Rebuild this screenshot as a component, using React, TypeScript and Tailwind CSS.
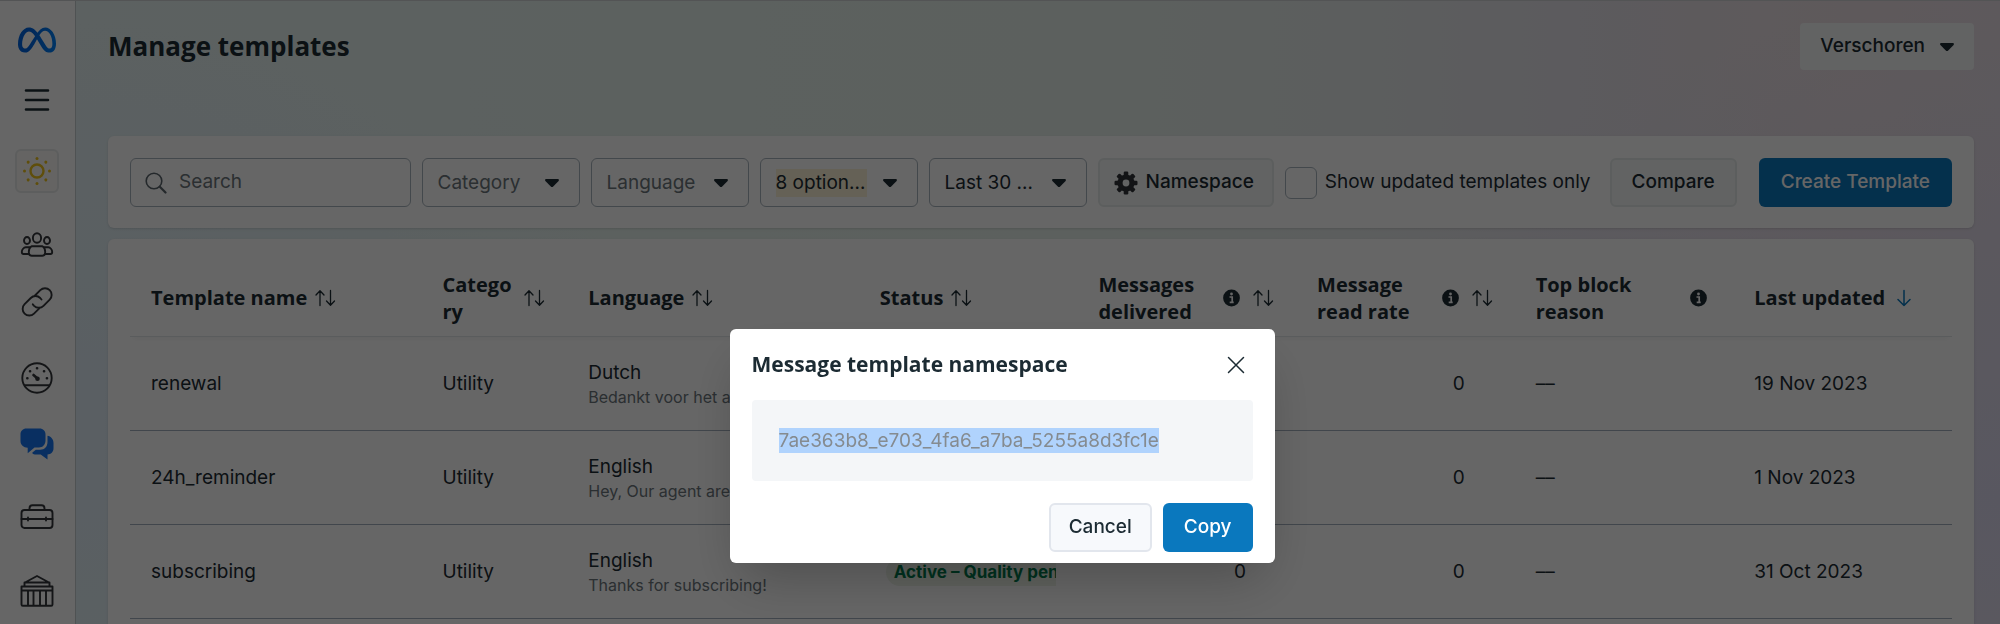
import type { ReactNode } from 'react';
import { SiMeta } from 'react-icons/si';

type Column = { title: string; width: string; info?: boolean; sort?: 'both' | 'down' };

const columns: Column[] = [
  { title: 'Template name', width: 'w-[16%]', sort: 'both' },
  { title: 'Category', width: 'w-[8%]', sort: 'both' },
  { title: 'Language', width: 'w-[16%]', sort: 'both' },
  { title: 'Status', width: 'w-[12%]', sort: 'both' },
  { title: 'Messages delivered', width: 'w-[12%]', info: true, sort: 'both' },
  { title: 'Message read rate', width: 'w-[12%]', info: true, sort: 'both' },
  { title: 'Top block reason', width: 'w-[12%]', info: true },
  { title: 'Last updated', width: 'w-[12%]', sort: 'down' }
];

type Template = { name: string; language: string; preview: string; status?: string; updated: string };

const templates: Template[] = [
  { name: 'renewal', language: 'Dutch', preview: 'Bedankt voor het a...', updated: '19 Nov 2023' },
  { name: '24h_reminder', language: 'English', preview: 'Hey, Our agent are...', updated: '1 Nov 2023' },
  { name: 'subscribing', language: 'English', preview: 'Thanks for subscribing!', status: 'Active – Quality pending', updated: '31 Oct 2023' }
];

const Caret = () => (
  <svg className="pointer-events-none h-2 w-3.5 shrink-0" viewBox="0 0 14 8" fill="#1c2b33" aria-hidden="true">
    <path d="M1.3 0h11.4c1.1 0 1.6 1.1.9 1.9L8.2 7.4c-.7.7-1.7.7-2.4 0L.4 1.9C-.3 1.1.2 0 1.3 0z" />
  </svg>
);

const SortArrows = () => (
  <svg className="h-[18px] w-[22px] shrink-0" viewBox="0 0 22 18" fill="none" stroke="#1c2b33" strokeWidth="1.3" strokeLinecap="round" strokeLinejoin="round" aria-hidden="true">
    <path d="M5 16.500V2M1 6l4-4.300L9 6M15.500 1.500V16M11.500 12l4 4.300L19.500 12" />
  </svg>
);

const ArrowDown = () => (
  <svg className="ml-1 h-[18px] w-4 shrink-0" viewBox="0 0 16 18" fill="none" stroke="#0a78be" strokeWidth="1.5" strokeLinecap="round" strokeLinejoin="round" aria-hidden="true">
    <path d="M7 1.500V16.500M1 10.500l6 6 6-6" />
  </svg>
);

const InfoIcon = () => (
  <svg className="h-[18px] w-[22px] shrink-0" viewBox="0 0 22 18" aria-hidden="true">
    <circle cx="8.500" cy="9" r="8.400" fill="#1c2b33" />
    <circle cx="8.500" cy="5" r="1.400" fill="#fff" />
    <path d="M6.500 8h2.700v5M6.700 13.300h4" fill="none" stroke="#fff" strokeWidth="1.700" />
  </svg>
);

const Gear = () => (
  <svg className="size-6 shrink-0" viewBox="-12 -12 24 24" fill="#303338" aria-hidden="true">
    <mask id="gear-hole">
      <rect x="-12" y="-12" width="24" height="24" fill="#fff" />
      <circle r="3.400" fill="#000" />
    </mask>
    <g mask="url(#gear-hole)">
      <circle r="8.600" />
      {[0, 45, 90, 135].map((angle) => (
        <rect key={angle} x="-2.300" y="-11.500" width="4.600" height="23" rx="1.200" transform={`rotate(${angle})`} />
      ))}
    </g>
  </svg>
);

const LineIcon = ({ children }: { children: ReactNode }) => (
  <svg className="size-9" viewBox="0 0 36 36" fill="none" stroke="#33363a" strokeWidth="1.900" strokeLinecap="round" strokeLinejoin="round" aria-hidden="true">
    {children}
  </svg>
);

const NavLink = ({ label, className, children }: { label: string; className: string; children: ReactNode }) => (
  <a href="#" aria-label={label} className={`flex h-8 items-center justify-center ${className}`}>
    {children}
  </a>
);

const Sidebar = () => (
  <nav aria-label="Main" className="flex w-[76px] shrink-0 flex-col items-center border-r border-[#c5ccd0] bg-white pt-[23px] pr-px">
    <a href="#" aria-label="Meta" className="flex h-8 items-center">
      <svg className="absolute size-0" aria-hidden="true">
        <defs>
          <linearGradient id="meta-blue" x1="0" y1="0" x2="1" y2="0">
            <stop offset="0.300" stopColor="#0064e0" />
            <stop offset="1" stopColor="#0082fb" />
          </linearGradient>
        </defs>
      </svg>
      <SiMeta size={38} fill="url(#meta-blue)" />
    </a>
    <button type="button" aria-label="Menu" className="mt-7 flex h-8 items-center">
      <svg className="h-6 w-[26px]" viewBox="0 0 26 24" stroke="#1c2b33" strokeWidth="2.600" strokeLinecap="round" aria-hidden="true">
        <path d="M2 2.500h22M2 12h22M2 21.500h22" />
      </svg>
    </button>
    <a href="#" aria-label="Account" className="mt-[33px] flex size-11 items-center justify-center rounded-md border-2 border-[#e9eaea] bg-[#fcfbf8]">
      <svg className="size-8" viewBox="-16 -16 32 32" aria-hidden="true">
        <circle r="6.500" fill="none" stroke="#eec21c" strokeWidth="2.400" />
        {[0, 45, 90, 135, 180, 225, 270, 315].map((angle) => (
          <circle key={angle} cy="-12.500" r="1.500" fill="#eec21c" transform={`rotate(${angle})`} />
        ))}
      </svg>
    </a>
    <NavLink label="Audiences" className="mt-9">
      <LineIcon>
        <ellipse cx="18" cy="11" rx="4.100" ry="4.800" />
        <ellipse cx="8" cy="13.500" rx="3" ry="3.500" />
        <ellipse cx="28" cy="13.500" rx="3" ry="3.500" />
        <path d="M12.500 19.300h11c1.700 1 2.700 3.200 2.700 5.800 0 2.500-1 3.700-3 3.700H12.800c-2 0-3-1.200-3-3.700 0-2.600 1-4.800 2.700-5.800z" />
        <path d="M10.500 20.300H6.800c-2 0-4 2.300-4 4.700 0 1.400.7 2 1.800 2H10M25.500 20.300h3.700c2 0 4 2.300 4 4.700 0 1.400-.7 2-1.800 2H26" />
      </LineIcon>
    </NavLink>
    <NavLink label="Links" className="mt-[25px]">
      <LineIcon>
        <path d="M16 11.500l5.300-5.300a6.600 6.600 0 0 1 9.400 9.400l-6.200 6.200a6.600 6.600 0 0 1-9.400 0l-1.300-1.500" />
        <path d="M20.300 24.300l-5.300 5.300a6.600 6.600 0 0 1-9.400-9.400l6.200-6.200a6.600 6.600 0 0 1 9.400 0l1.300 1.500" />
      </LineIcon>
    </NavLink>
    <NavLink label="Dashboard" className="mt-11">
      <LineIcon>
        <circle cx="18" cy="18" r="14.700" />
        <path d="M6 25.300h24" />
        <path d="M14.500 15l4 3.500" strokeWidth="2.600" />
        <circle cx="18.500" cy="18.800" r="1.200" strokeWidth="2.200" />
        <path d="M8.300 18.200h.1M11 11.200h.1M18 8.300h.1M25 11.200h.1M27.900 18.200h.1" strokeWidth="2.600" />
      </LineIcon>
    </NavLink>
    <NavLink label="WhatsApp messages" className="mt-[34px]">
      <svg className="size-9" viewBox="0 0 36 36" fill="#1877f2" aria-hidden="true">
        <path d="M7.300 2.500h13.400c3.300 0 5.800 2.500 5.800 5.800v6.200c0 4.200-2.800 7-6.500 7h-4.500L8.700 27.300v-5.600C4.500 21.500 1.500 19 1.500 15V8.300c0-3.300 2.500-5.800 5.800-5.800z" />
        <path d="M28.500 9.800c3.500.6 6 3.500 6 7.200v5.500c0 3.400-2.500 5.800-6 6v5l-6.800-5h-5.900c-1.300 0-2.200-.8-2.600-1.700l3.600-3h4.400c4.600 0 7.300-3.200 7.300-8z" />
      </svg>
    </NavLink>
    <NavLink label="Business tools" className="mt-[41px]">
      <LineIcon>
        <rect x="2.500" y="11" width="31" height="18" rx="3" />
        <path d="M10.500 10.500V9.500c0-2 1-3.200 3-3.200h9c2 0 3 1.200 3 3.200v1M2.500 20h31M9 18.500v3M27 18.500v3" />
      </LineIcon>
    </NavLink>
    <NavLink label="Business settings" className="mt-[42px]">
      <LineIcon>
        <path d="M6 9.500L18 3l12 6.500M5.500 9.500h25v4h-25zM2.500 13.500h31v18c0 .8-.4 1.300-1.300 1.300H3.800c-.9 0-1.300-.5-1.300-1.300zM2.500 17.500h31M9 18v14M14.500 18v14M21 18v14M27 18v14" />
      </LineIcon>
    </NavLink>
  </nav>
);

const FilterSelect = ({ label, value, className }: { label: string; value: string; className: string }) => (
  <div className="flex h-[49px] w-[158px] shrink-0 items-center gap-4 rounded-md border border-[#a9b4bd] bg-white pr-5 pl-[15px]">
    <select aria-label={label} className={`h-7 min-w-0 flex-1 appearance-none truncate text-[19px] outline-none ${className}`}>
      <option>{value}</option>
    </select>
    <Caret />
  </div>
);

const FilterBar = () => (
  <section aria-label="Filters" className="flex items-center gap-[11px] rounded-md bg-white px-[22px] pt-[22px] pb-[21px] shadow-sm">
    <label className="flex h-[49px] min-w-0 flex-1 items-center gap-3 rounded-md border border-[#a9b4bd] px-[14px]">
      <svg className="size-[22px] shrink-0" viewBox="0 0 22 22" fill="none" stroke="#5a656c" strokeLinecap="round" aria-hidden="true">
        <circle cx="9" cy="9" r="7.800" strokeWidth="1.600" />
        <path d="M14.800 14.800l5.700 5.700" strokeWidth="2.200" />
      </svg>
      <input type="search" aria-label="Search templates" placeholder="Search" className="min-w-0 flex-1 text-[19px] outline-none placeholder:text-[#6b757b]" />
    </label>
    <FilterSelect label="Category" value="Category" className="text-[#6b757b]" />
    <FilterSelect label="Language" value="Language" className="text-[#6b757b]" />
    <FilterSelect label="Status" value="8 options selected" className="bg-[#fdf3d6] text-[#1c2b33]" />
    <FilterSelect label="Date range" value="Last 30 days" className="text-[#1c2b33]" />
    <button type="button" className="flex h-[49px] shrink-0 items-center gap-2 rounded-md border-2 border-[#e6ebea] bg-[#f5f8f7] pr-[18px] pl-[14px] font-medium">
      <Gear />
      Namespace
    </button>
    <label className="flex shrink-0 items-center gap-2">
      <input type="checkbox" className="size-8 appearance-none rounded-md border border-[#a9b4bd]" />
      Show updated templates only
    </label>
    <button type="button" className="ml-2 h-[49px] shrink-0 rounded-md border-2 border-[#e6ebea] bg-[#f5f8f7] px-5 font-medium">
      Compare
    </button>
    <button type="button" className="ml-[11px] h-[49px] shrink-0 rounded-md bg-[#0a78be] px-[22px] font-medium text-white">
      Create Template
    </button>
  </section>
);

const TemplatesTable = () => (
  <section aria-label="Templates" className="mt-[11px] flex-1 rounded-t-md bg-white px-[22px] pt-[21px] shadow-sm">
    <table className="w-full table-fixed border-collapse text-left">
      <thead>
        <tr className="h-[76px] border-b border-[#e2e5e8] shadow-[0_6px_6px_-4px_rgba(0,0,0,0.06)]">
          {columns.map((column) => (
            <th key={column.title} scope="col" className={`px-[21px] py-0 font-['Open_Sans',sans-serif] text-[20px] leading-[27px] font-bold ${column.width}`}>
              <div className="flex items-center gap-2">
                <span className={`min-w-0 break-words ${column.info ? 'flex-1' : ''}`}>{column.title}</span>
                {column.info && <InfoIcon />}
                {column.sort === 'both' && <SortArrows />}
                {column.sort === 'down' && <ArrowDown />}
              </div>
            </th>
          ))}
        </tr>
      </thead>
      <tbody>
        {templates.map((template) => (
          <tr key={template.name} className="h-[94px] border-b border-[#a3afbd]">
            <td className="px-[21px] pt-0.5">{template.name}</td>
            <td className="px-[21px] pt-0.5">Utility</td>
            <td className="px-[21px] pt-1">
              <p className="leading-6">{template.language}</p>
              <p className="truncate text-base leading-6 text-[#6b757b]">{template.preview}</p>
            </td>
            <td className="px-[21px] pt-0.5">
              {template.status && (
                <div className="overflow-hidden pl-1.5">
                  <span className="block w-max rounded-full bg-[#edf4e9] px-2 text-[17px] leading-7 font-bold text-[#007a4d]">
                    {template.status}
                  </span>
                </div>
              )}
            </td>
            <td className="pt-0.5 pr-[50px] text-right">0</td>
            <td className="pt-0.5 pr-[50px] text-right">0</td>
            <td className="px-[21px] pt-0.5">––</td>
            <td className="px-[21px] pt-0.5">{template.updated}</td>
          </tr>
        ))}
      </tbody>
    </table>
  </section>
);

const NamespaceDialog = () => (
  <div className="fixed inset-0 flex items-start justify-center bg-black/60 pt-[329px] pl-1">
    <div role="dialog" aria-modal="true" aria-labelledby="namespace-title" className="w-full max-w-[545px] rounded-md bg-white px-[22px] pb-[11px] shadow-2xl">
      <div className="flex h-[71px] items-center justify-between pr-2">
        <h2 id="namespace-title" className="font-['Open_Sans',sans-serif] text-[21px] font-bold">
          Message template namespace
        </h2>
        <button type="button" aria-label="Close">
          <svg className="size-[18px]" viewBox="0 0 18 18" stroke="#1c2b33" strokeWidth="1.500" strokeLinecap="round" aria-hidden="true">
            <path d="M1.500 1.500l15 15M16.500 1.500l-15 15" />
          </svg>
        </button>
      </div>
      <div className="flex h-[81px] items-center rounded-sm bg-[#f4f6f8] px-[27px]">
        <span className="bg-[#b0d3fd] leading-[25px] text-[#858b90]">7ae363b8_e703_4fa6_a7ba_5255a8d3fc1e</span>
      </div>
      <div className="mt-[22px] flex justify-end gap-[11px]">
        <button type="button" className="h-[49px] rounded-md border-2 border-[#e2e6ed] bg-[#f7f9fc] px-[18px] font-medium">
          Cancel
        </button>
        <button type="button" className="h-[49px] rounded-md bg-[#0a78be] px-[21px] font-medium text-white">
          Copy
        </button>
      </div>
    </div>
  </div>
);

export default function App() {
  return (
    <div className="flex h-screen overflow-hidden border-t border-[#d0d3d5] bg-white font-[Inter,sans-serif] text-[19px] text-[#1c2b33]">
      <Sidebar />
      <main className="flex min-w-0 flex-1 flex-col bg-[radial-gradient(ellipse_30%_80%_at_0%_70%,#e0edf8,transparent),radial-gradient(ellipse_35%_80%_at_100%_80%,#dddaf0,transparent),linear-gradient(90deg,#e6f3f1_0%,#e6f3ef_20%,#e6f1eb_50%,#e6eceb_65%,#e6e3ea_78%,#ecdfe3_92%,#e9dfe6_100%)] pr-[26px] pl-8">
        <header className="flex h-[135px] shrink-0 items-start justify-between pt-[22px]">
          <h1 className="font-['Open_Sans',sans-serif] text-[26px] leading-[46px] font-bold">Manage templates</h1>
          <button type="button" className="flex h-[47px] items-center gap-[15px] rounded-sm bg-[#f5f8f7] px-5 font-medium">
            Verschoren
            <Caret />
          </button>
        </header>
        <FilterBar />
        <TemplatesTable />
      </main>
      <NamespaceDialog />
    </div>
  );
}
